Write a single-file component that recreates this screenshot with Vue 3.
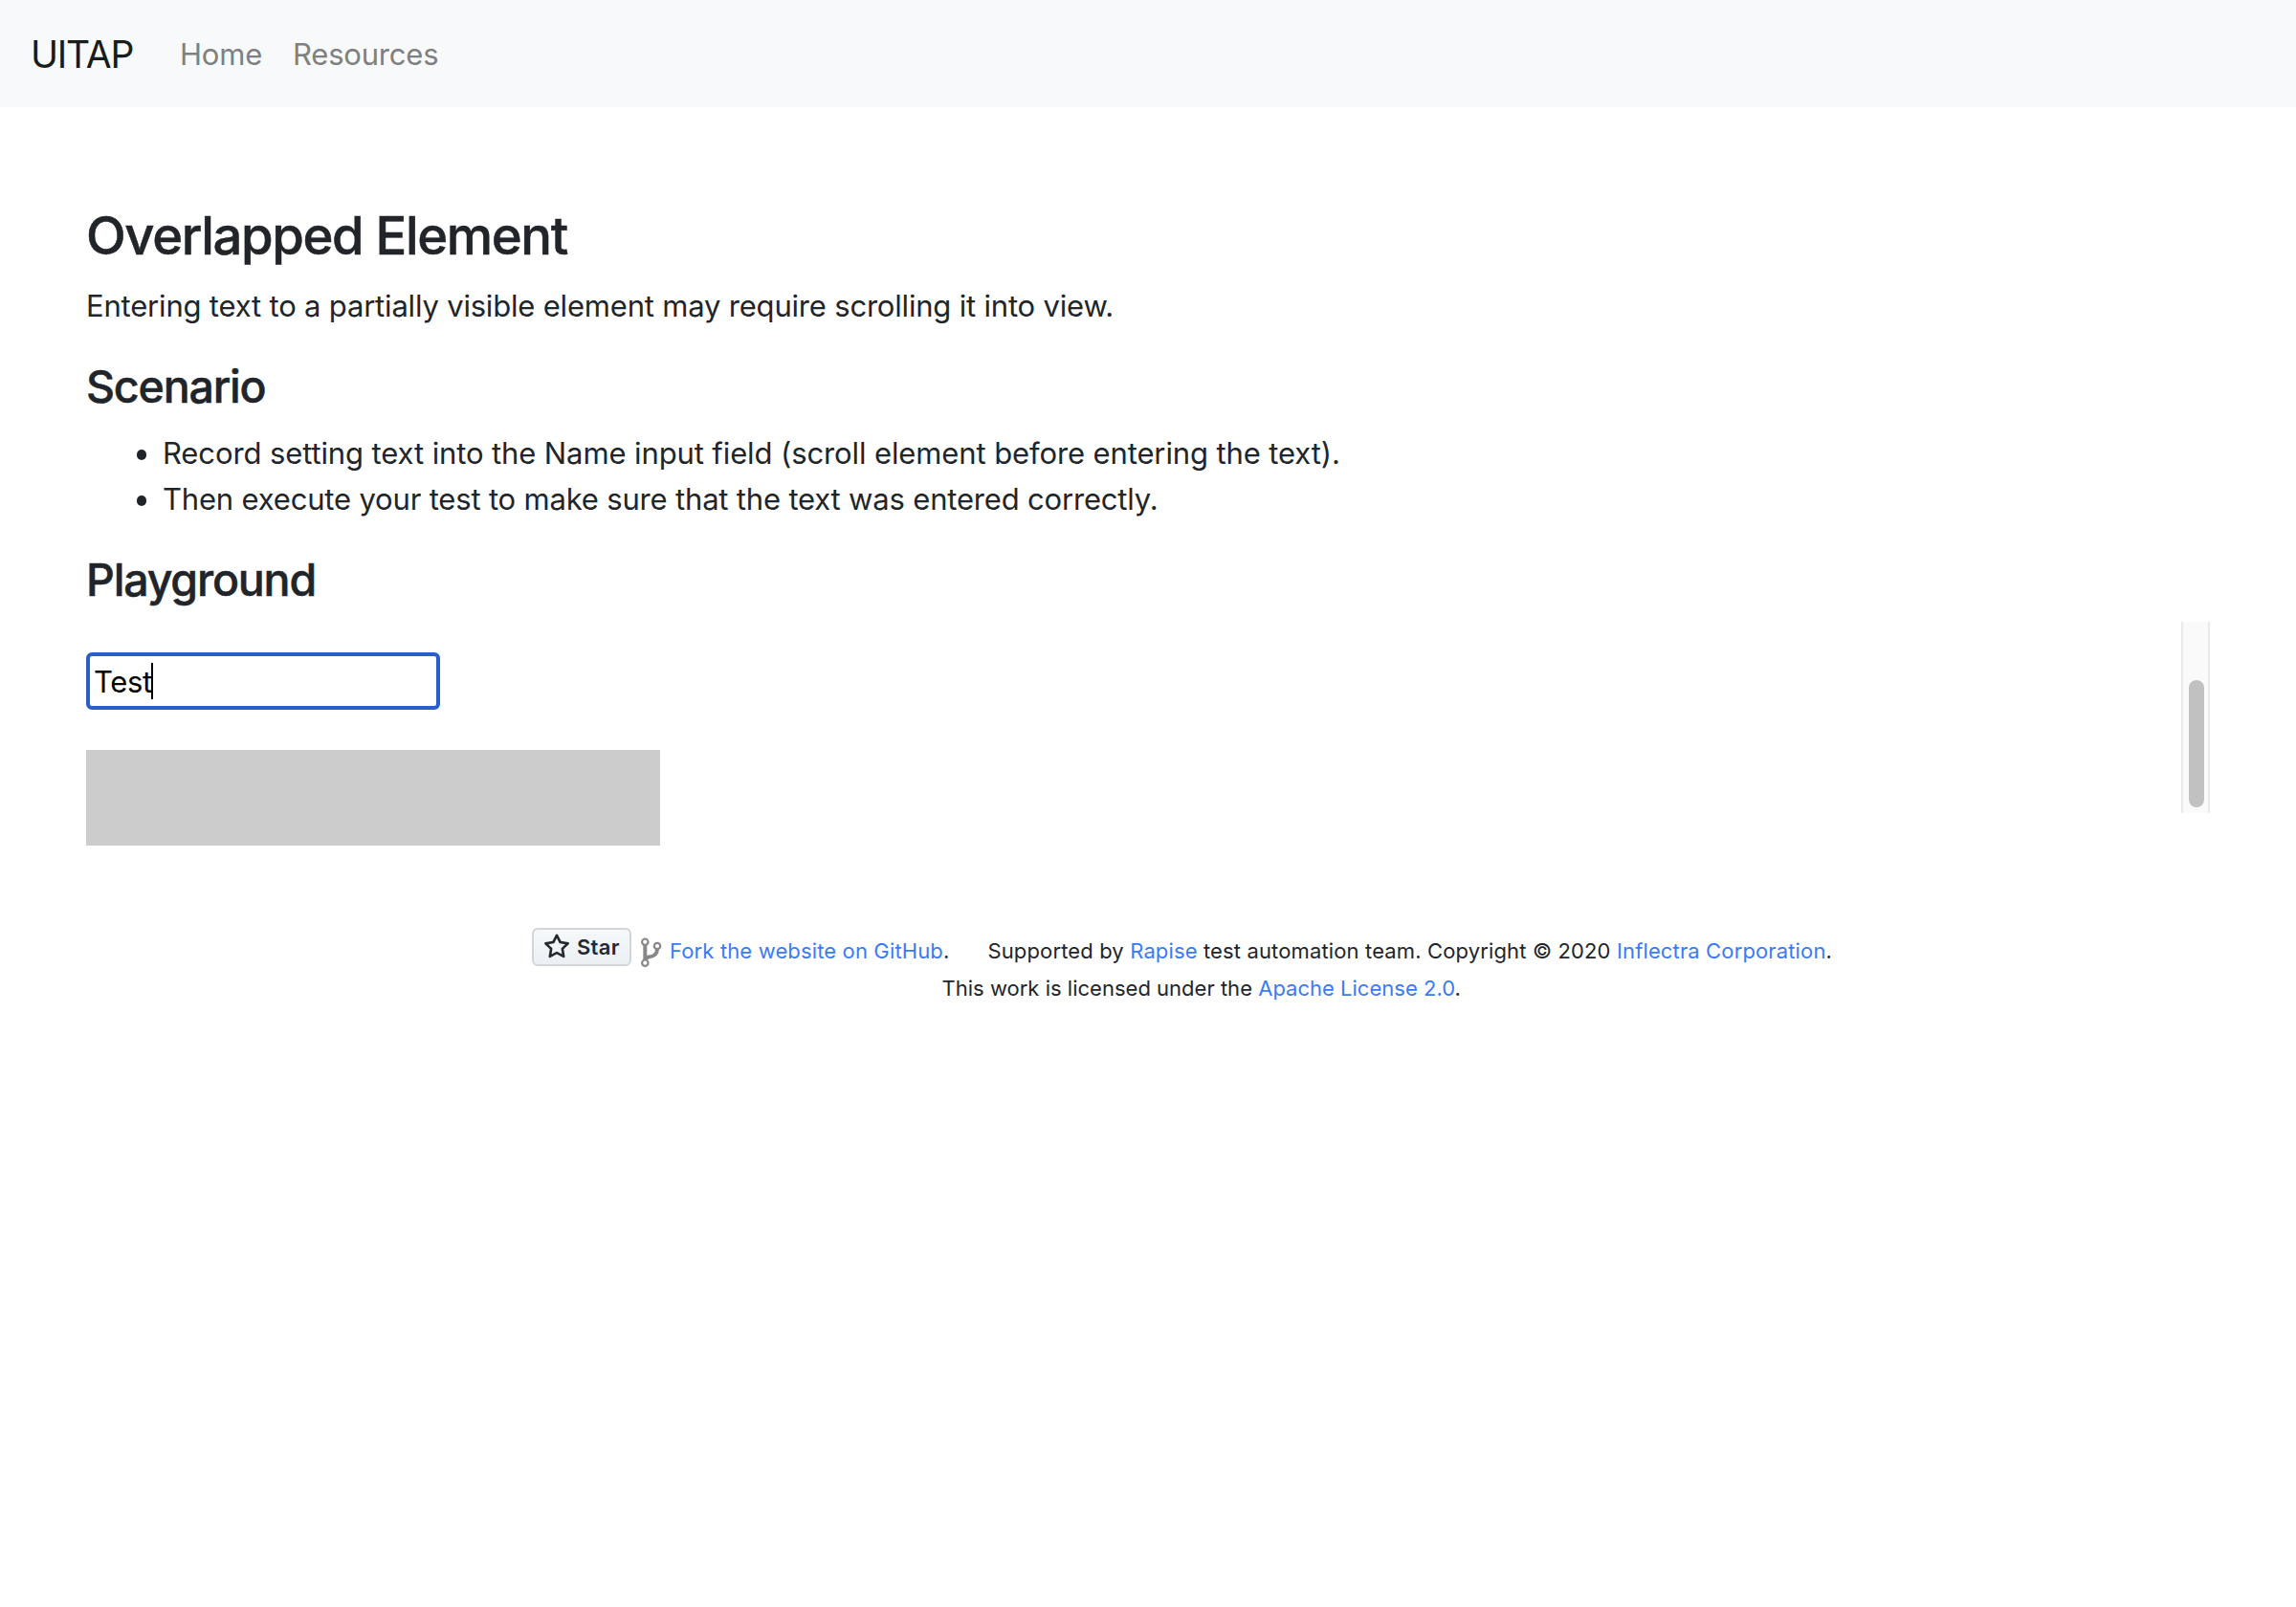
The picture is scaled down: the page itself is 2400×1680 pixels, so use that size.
<script setup>
const steps = [
  'Record setting text into the Name input field (scroll element before entering the text).',
  'Then execute your test to make sure that the text was entered correctly.',
]
</script>

<template>
  <nav class="navbar">
    <a class="brand">UITAP</a>
    <a class="nav-link home">Home</a>
    <a class="nav-link resources">Resources</a>
  </nav>

  <main class="content">
    <h2>Overlapped Element</h2>
    <p class="lead">Entering text to a partially visible element may require scrolling it into view.</p>
    <h3 class="scenario">Scenario</h3>
    <ul>
      <li v-for="(step, i) in steps" :key="i" :class="{ second: i === 1 }">{{ step }}</li>
    </ul>
    <h3 class="playground">Playground</h3>

    <section class="pane">
      <div class="pane-body">
        <div class="field">Test<span class="caret"></span></div>
        <div class="overlap"></div>
      </div>
      <div class="scrollbar"><div class="thumb"></div></div>
    </section>
  </main>

  <footer class="footer">
    <div class="line first">
      <a class="star">
        <svg width="28" height="28" viewBox="0 0 16 16"><path fill="#24292f" fill-rule="evenodd" d="M8 .25a.75.75 0 0 1 .673.418l1.882 3.815 4.21.612a.75.75 0 0 1 .416 1.279l-3.046 2.97.719 4.192a.75.75 0 0 1-1.088.791L8 12.347l-3.766 1.98a.75.75 0 0 1-1.088-.79l.72-4.194L.818 6.374a.75.75 0 0 1 .416-1.28l4.21-.611L7.327.668A.75.75 0 0 1 8 .25zm0 2.445L6.615 5.5a.75.75 0 0 1-.564.41l-3.097.45 2.24 2.184a.75.75 0 0 1 .216.664l-.528 3.084 2.769-1.456a.75.75 0 0 1 .698 0l2.77 1.456-.53-3.084a.75.75 0 0 1 .216-.664l2.24-2.183-3.096-.45a.75.75 0 0 1-.564-.41L8 2.694z"/></svg>
        <span>Star</span>
      </a>
      <svg class="fork" width="22" height="32" viewBox="0 0 22 32" fill="none" stroke="#888">
        <path stroke-width="4" d="M4.300 8V24M17 12C17 19 12 20 8 20.500C6 21 4.500 22 4.300 24"/>
        <g fill="#fff" stroke-width="2.200"><circle cx="4.300" cy="4.700" r="3.200"/><circle cx="17" cy="9" r="3.200"/><circle cx="4.300" cy="26.700" r="3.200"/></g>
      </svg>
      <span><a>Fork the website on GitHub</a>.</span>
      <span class="support">Supported by <a>Rapise</a> test automation team. Copyright © 2020 <a>Inflectra Corporation</a>.</span>
    </div>
    <div class="line last">This work is licensed under the <a>Apache License 2.0</a>.</div>
  </footer>
</template>

<style>
body {
  background: #fff;
  font-family: Inter, "Liberation Sans", sans-serif;
  color: #212529;
}
</style>

<style scoped>
.navbar {
  display: flex;
  align-items: center;
  height: 112px;
  box-sizing: border-box;
  padding: 2px 0 0 32px;
  background: #f8f9fb;
  white-space: nowrap;
}
.brand {
  width: 156px;
  font-size: 39px;
  line-height: 60px;
  letter-spacing: -1.19px;
  color: #1a1b1b;
}
.nav-link {
  font-size: 31px;
  line-height: 48px;
  letter-spacing: -0.2px;
  color: #7f8080;
}
.home { width: 118px; }

.content { padding: 101px 90px 0; }
h2, h3 {
  font-weight: 500;
  white-space: nowrap;
  -webkit-text-stroke: 0.5px #212529;
}
h2 {
  margin: 0 0 16px;
  font-size: 54.4px;
  line-height: 67px;
  letter-spacing: -1.38px;
}
h3 {
  margin: 0 0 16px;
  font-size: 46.5px;
  line-height: 58px;
  letter-spacing: -1.18px;
}
h3.playground { margin-bottom: 15px; }
.lead, ul {
  margin: 0 0 31px;
  font-size: 31px;
  line-height: 48px;
  white-space: nowrap;
}
.lead { letter-spacing: -0.19px; }
h3.scenario { margin-bottom: 17px; }
ul { padding: 0; list-style: none; letter-spacing: -0.11px; }
li { display: flex; }
li.second { letter-spacing: -0.18px; }
li::before {
  content: "";
  width: 10.500px;
  height: 10.500px;
  margin: 20px 16.800px 0 52.700px;
  border-radius: 50%;
  background: #212529;
}

.pane { display: flex; height: 200px; }
.pane-body { flex: 1; padding-top: 32px; }
.field {
  display: flex;
  box-sizing: border-box;
  width: 369.500px;
  height: 60px;
  padding: 4px 4px 0;
  border: 4px solid #275ec8;
  border-radius: 6px;
  font-size: 31px;
  line-height: 46px;
  letter-spacing: -0.34px;
  color: #000;
}
.caret {
  width: 2px;
  height: 38px;
  margin: 3px 0 0 -1px;
  background: #000;
}
.overlap {
  width: 600px;
  height: 100px;
  margin-top: 42px;
  background: #ccc;
}
.scrollbar {
  box-sizing: border-box;
  width: 30px;
  padding: 61px 4px 0 6px;
  border: solid #e9e9e9;
  border-width: 0 2px;
  background: #fafafa;
}
.thumb {
  width: 16px;
  height: 133px;
  border-radius: 8px;
  background: #c1c1c1;
}

.footer {
  padding-top: 125px;
  font-size: 22px;
  line-height: 39px;
  white-space: nowrap;
}
.footer a { color: #397bf7; }
.line { display: flex; align-items: flex-start; height: 39px; letter-spacing: 0.137px; }
.first { padding-left: 556px; }
.last { display: block; padding-left: 984.500px; letter-spacing: 0.012px; }
.footer .star {
  display: flex;
  box-sizing: border-box;
  width: 104px;
  height: 40px;
  margin-top: -5px;
  padding-left: 10px;
  border: 2px solid #d3d6d9;
  border-radius: 6px;
  background: linear-gradient(#f6f8fa, #ebf0f4);
  font-weight: 600;
  line-height: 36px;
  letter-spacing: 0.3px;
  color: #24292f;
}
.star svg { margin-top: 4px; }
.star span { margin-left: 7px; }
.fork { margin: 5px 8px 0 10px; }
.support { margin-left: 40px; }
</style>
